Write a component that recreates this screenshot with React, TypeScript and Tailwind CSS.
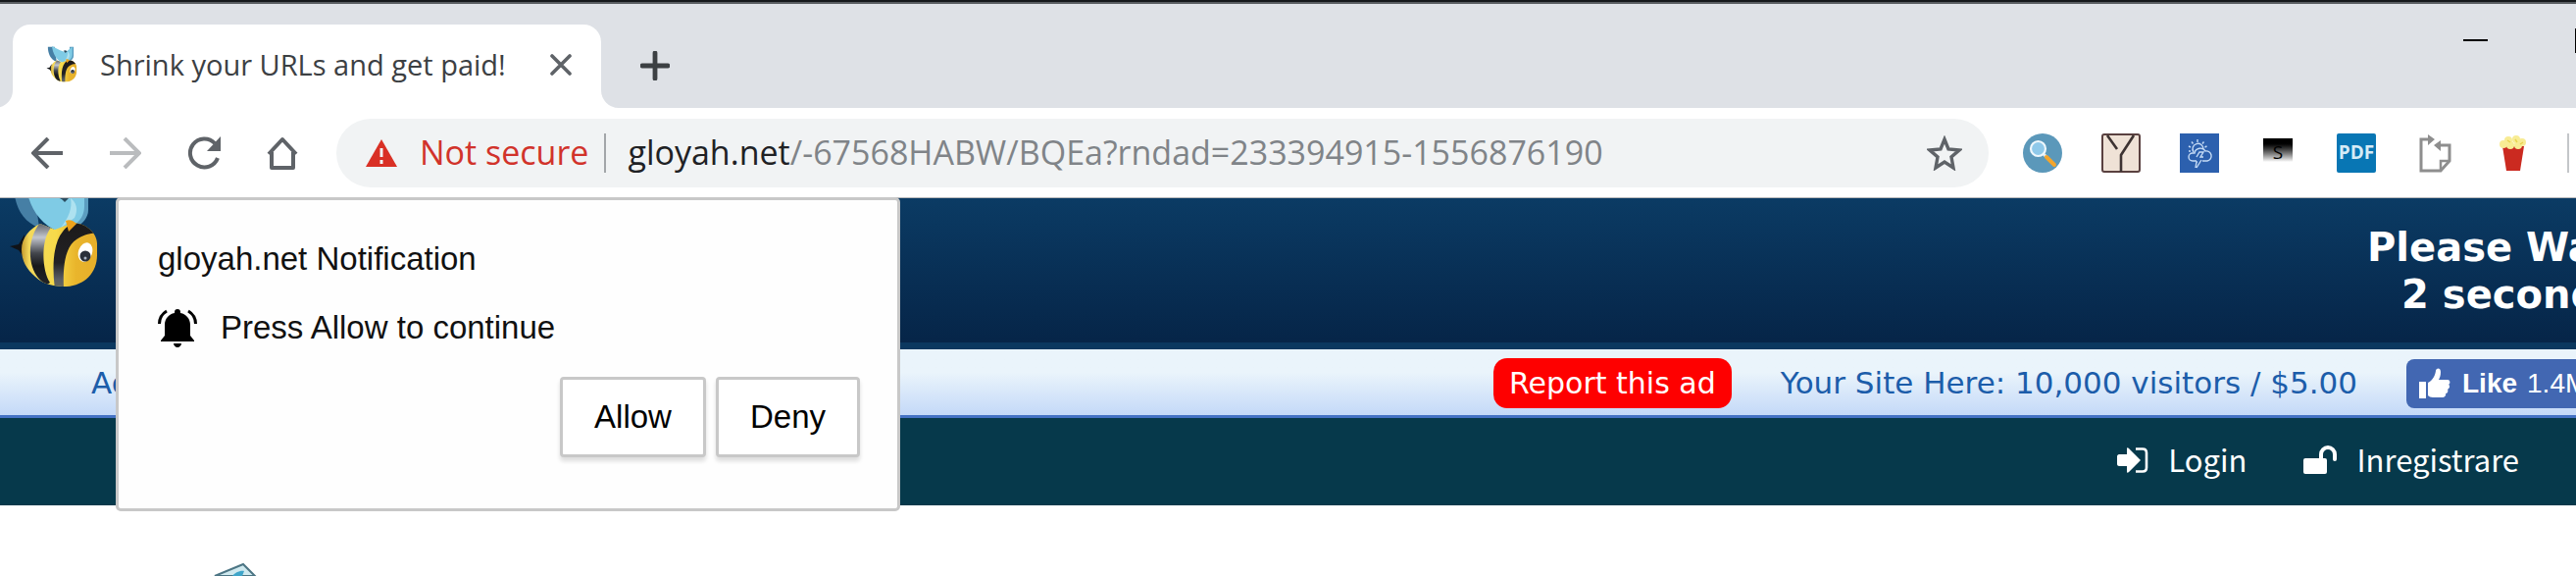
const navButton = 'flex h-10 w-10 items-center justify-center text-[#5f6368]';
const popupButton = 'h-[82px] rounded-[4px] border-3 border-[#c8c8c8] bg-white px-8 text-black shadow-[0_4px_4px_#ddd]';

function Bee({ className }: { className?: string }) {
  return (
    <svg className={className} viewBox="0 -8 90 110" aria-hidden="true">
      <defs>
        <linearGradient id="beeBody" x1="0" x2="1">
          <stop offset="0" stopColor="#b98a24" />
          <stop offset="0.12" stopColor="#f3d95c" />
          <stop offset="0.45" stopColor="#f6da4a" />
          <stop offset="0.7" stopColor="#e9b52c" />
          <stop offset="1" stopColor="#e6ae2a" />
        </linearGradient>
        <linearGradient id="beeStripe" x1="0" y1="0" x2="0" y2="1">
          <stop offset="0" stopColor="#54565c" />
          <stop offset="0.25" stopColor="#c3c6ce" />
          <stop offset="0.5" stopColor="#43464c" />
          <stop offset="0.7" stopColor="#17181b" />
          <stop offset="1" stopColor="#232428" />
        </linearGradient>
        <linearGradient id="beeBand" x1="0" y1="0" x2="0" y2="1">
          <stop offset="0" stopColor="#1c1a1a" />
          <stop offset="0.6" stopColor="#222225" />
          <stop offset="0.85" stopColor="#5a5e66" />
          <stop offset="1" stopColor="#6d6a58" />
        </linearGradient>
        <clipPath id="beeClip">
          <path d="M12 60C12 49 20 39 31 34L46 40 62 34C74 31 89 42 89 54v12C89 84 76 97 58 98 46 98 34 96 26 88 17 80 12 72 12 60z" />
        </clipPath>
      </defs>
      <path d="M4 -6C4 14 12 32 30 38L24 -6z" fill="#467fa5" />
      <path d="M68 -6h12v26c0 8-6 14-12 17z" fill="#5b9dc0" />
      <path d="M16 -8c2 20 12 42 34 50C66 38 76 30 76 16V-6L56 10 40 4z" fill="#7fcbe5" />
      <path d="M50 6l6 6 5-5-5-3z" fill="#2b4c5f" />
      <path d="M62 8c6 4 8 12 4 20l-14 10c8-10 12-20 10-30z" fill="#aee2f0" />
      <path d="M0 57l9-2 6-10v24l-6-8z" fill="#101318" />
      <g clipPath="url(#beeClip)">
        <path d="M10 30h82v74H10z" fill="url(#beeBody)" />
        <path d="M32 32c-10 10-14 30-9 46 3 9 8 15 15 18l3-2C33 82 31 52 42 38z" fill="url(#beeStripe)" />
        <path d="M90 44C80 30 62 30 54 42 44 54 43 78 46 101h9C54 78 56 58 68 50c6-4 14-7 22-6z" fill="url(#beeBand)" />
      </g>
      <path d="M57 31c4-2 8 0 11 3l-8 8z" fill="#eca21c" />
      <ellipse cx="77" cy="63" rx="7" ry="10" fill="#fff" transform="rotate(18 77 63)" />
      <circle cx="77" cy="67" r="5.500" fill="#2a303b" />
      <circle cx="77" cy="69" r="1.500" fill="#a9b4c6" />
    </svg>
  );
}

function TabStrip() {
  return (
    <div className="flex h-[110px] overflow-hidden border-t-2 border-[#15181b] bg-[#dee1e6] shadow-[inset_0_2px_#595d61]">
      <div className="relative ml-[13px] mt-[23px] flex w-[600px] shrink-0 items-center rounded-t-[18px] bg-white pb-1 pl-[34px] pr-[27px]">
        <Bee className="h-[38px] w-8" />
        <span className="ml-[23px] grow whitespace-nowrap text-[29px] text-[#3c4043]">Shrink your URLs and get paid!</span>
        <button aria-label="Close tab" className="flex h-7 w-7 items-center justify-center text-[#5f6368]">
          <svg className="h-[22px] w-[22px]" viewBox="0 0 22 22" stroke="currentColor" strokeWidth="3.6" strokeLinecap="round">
            <path d="M2 2l18 18M20 2L2 20" />
          </svg>
        </button>
        <svg className="absolute -left-[18px] bottom-0 h-[18px] w-[18px]" viewBox="0 0 18 18" fill="#fff">
          <path d="M18 0v18H0C10 18 18 10 18 0z" />
        </svg>
        <svg className="absolute -right-[18px] bottom-0 h-[18px] w-[18px]" viewBox="0 0 18 18" fill="#fff">
          <path d="M0 0v18h18C8 18 0 10 0 0z" />
        </svg>
      </div>
      <button aria-label="New tab" className="ml-[40px] mt-[50px] h-[30px] w-[30px] shrink-0 text-[#3c4043]">
        <svg viewBox="0 0 30 30" stroke="currentColor" strokeWidth="4.8" strokeLinecap="round">
          <path d="M15 2v26M2 15h26" />
        </svg>
      </button>
      <div className="ml-auto flex shrink-0 items-start pt-[27px]">
        <button aria-label="Minimize" className="mr-[89px] flex h-6 w-[25px] items-center">
          <span className="h-[2px] w-full bg-black" />
        </button>
        <button aria-label="Maximize" className="h-[25px] w-[1px] bg-black" />
      </div>
    </div>
  );
}

function Extensions() {
  return (
    <div className="ml-[35px] flex shrink-0 items-center gap-10">
      <button aria-label="Search">
        <svg className="h-10 w-10" viewBox="0 0 40 40">
          <circle cx="20" cy="20" r="20" fill="#5b98ba" />
          <path d="M21 21l3 3" stroke="#e8eef2" strokeWidth="3" />
          <path d="M24 24l8 8" stroke="#f3a52c" strokeWidth="4" strokeLinecap="round" />
          <circle cx="15.500" cy="15.500" r="7.500" fill="#8fc9ea" stroke="#eef7fc" strokeWidth="2.200" />
        </svg>
      </button>
      <button aria-label="Wardrobe">
        <svg className="h-10 w-10" viewBox="0 0 40 40" fill="none" stroke="#5a4140">
          <rect x="1" y="1" width="38" height="38" rx="2" fill="#efe2d6" strokeWidth="2" />
          <path d="M6 2l10 14M33 2L20 22v17" stroke="#3d3332" strokeWidth="2.600" />
        </svg>
      </button>
      <button aria-label="Weather">
        <svg className="h-10 w-10" viewBox="0 0 40 40" fill="none" stroke="#c4daf5" strokeWidth="1.400">
          <path d="M0 0h40v40H0z" fill="#2c60ae" stroke="none" />
          <path d="M14 19a5.500 5.500 0 1 1 10-3" />
          <path d="M18 9V6M13.500 10.500l-1.500-2M23 10.500l1.500-2M11 14l-2-1M25.500 14l2-1M11 18H9" />
          <path d="M17 28h-4a4 4 0 0 1 0-8h2a6 6 0 0 1 11-2 5 5 0 0 1 2 10h-5" />
          <path d="M17 24l3-5h4l-3 5h3M22 27l-5 8M18 29h-1l-1 6" />
        </svg>
      </button>
      <button aria-label="S" className="flex h-10 w-10 items-start justify-center pt-[5px]">
        <span className="flex h-6 w-[30px] items-end justify-center bg-linear-to-b from-black from-15% to-white font-['Open_Sans'] text-[19px] leading-[19px] text-black">S</span>
      </button>
      <button aria-label="PDF" className="flex h-10 w-10 items-center justify-center rounded-[2px] bg-[#0876b4] font-['Open_Sans'] text-[19px] font-bold text-[#d5ebf6]">PDF</button>
      <button aria-label="Copy pages">
        <svg className="h-10 w-10" viewBox="0 0 40 40" fill="none" stroke="#8e8e8e" strokeWidth="3">
          <path d="M13 6H6v32h20l9-10V12H24" />
          <path d="M13 1l7 5-7 6zM26 7l-7 5 7 6z" fill="#8e8e8e" stroke="none" />
          <path d="M26 37V28h8" strokeWidth="2.500" />
        </svg>
      </button>
      <button aria-label="Popcorn">
        <svg className="h-10 w-10" viewBox="0 0 40 40">
          <path d="M9 13h22l-4 25H13z" fill="#cb2a20" />
          <g fill="#f8ec94">
            <circle cx="10" cy="11" r="4" />
            <circle cx="15" cy="7" r="4" />
            <circle cx="23" cy="6" r="4" />
            <circle cx="29" cy="9" r="4" />
            <circle cx="17" cy="12" r="4" />
            <circle cx="25" cy="12" r="4" />
          </g>
          <path d="M14 7l3 2M22 6l2 3M27 11l3-2" stroke="#e8d350" strokeWidth="1.500" />
        </svg>
      </button>
      <span className="-ml-[5px] mr-[7px] h-10 w-[2px] bg-[#c4c6c9]" />
    </div>
  );
}

function Toolbar() {
  return (
    <div className="flex h-[92px] items-center border-b border-[#b5b6b8] bg-white pl-7">
      <div className="flex shrink-0 gap-10">
        <button aria-label="Back" className={navButton}>
          <svg className="h-8 w-8" viewBox="0 0 32 32" fill="none" stroke="currentColor" strokeWidth="4">
            <path d="M32 16H3M17 1L2 16l15 15" />
          </svg>
        </button>
        <button aria-label="Forward" className="flex h-10 w-10 items-center justify-center text-[#babcbe]">
          <svg className="h-8 w-8" viewBox="0 0 32 32" fill="none" stroke="currentColor" strokeWidth="4">
            <path d="M0 16h29M15 1l15 15-15 15" />
          </svg>
        </button>
        <button aria-label="Reload" className={navButton}>
          <svg className="h-[34px] w-[34px]" viewBox="0 0 34 34" fill="none" stroke="currentColor" strokeWidth="4">
            <path d="M31 22A14.500 14.500 0 1 1 28 7" />
            <path d="M34 0v15H20z" fill="currentColor" stroke="none" />
          </svg>
        </button>
        <button aria-label="Home" className={navButton}>
          <svg className="h-[34px] w-8" viewBox="0 0 32 34" fill="none" stroke="currentColor" strokeWidth="4">
            <path d="M2 18L16 3l14 15M5 16v16h22V16" strokeLinejoin="round" />
          </svg>
        </button>
      </div>
      <div className="ml-[35px] flex h-[70px] min-w-0 grow items-center rounded-full bg-[#f1f3f4] pl-[30px] pr-[27px]">
        <svg className="h-[28px] w-[32px] shrink-0" viewBox="0 0 32 28">
          <path d="M16 0l16 28H0z" fill="#d93025" />
          <path d="M16 9v9M16 21v4" stroke="#f1f3f4" strokeWidth="3" />
        </svg>
        <span className="ml-[23px] whitespace-nowrap text-[34px] text-[#d1332b]">Not secure</span>
        <span className="ml-4 h-10 w-[2px] shrink-0 bg-[#a3a6a9]" />
        <a href="#" className="ml-[22px] grow truncate text-[34px] text-[#808488]">
          <span className="text-[#202124]">gloyah.net</span>/-67568HABW/BQEa?rndad=233394915-1556876190
        </a>
        <button aria-label="Bookmark this page" className="shrink-0 text-[#5f6368]">
          <svg className="h-9 w-9" viewBox="0 0 36 36" fill="none" stroke="currentColor" strokeWidth="3.400">
            <path d="M18 4l4 10 11 1-8 7 2 11-9-6-9 6 2-11-8-7 11-1z" />
          </svg>
        </button>
      </div>
      <Extensions />
    </div>
  );
}

function NotificationPopup() {
  return (
    <div role="dialog" aria-label="gloyah.net Notification" className="absolute left-[118px] -top-px h-[320px] w-[800px] rounded-[5px] border-3 border-[#c8c8c8] bg-[#fefefe] pl-10 pr-[38px] pt-10 font-['Liberation_Sans'] text-[33px] text-[#111]">
      <h2 className="leading-10">gloyah.net Notification</h2>
      <div className="mt-[30px] flex items-center gap-6 leading-10">
        <svg className="h-10 w-10" viewBox="0 0 40 40" fill="#000">
          <path d="M20 1c2 0 3 1 3 3v1c6 1 10 6 10 12v11l4 5v1H3v-1l4-5V17C7 11 11 6 17 5V4c0-2 1-3 3-3zM16 36h8c0 2-2 4-4 4s-4-2-4-4z" />
          <path d="M9 3C4 6 1.500 10 1.500 16M31 3c5 3 7.500 7 7.500 13" fill="none" stroke="#000" strokeWidth="3" />
        </svg>
        <p>Press Allow to continue</p>
      </div>
      <div className="mt-[30px] flex justify-end gap-2.5">
        <button className={popupButton}>Allow</button>
        <button className={popupButton}>Deny</button>
      </div>
    </div>
  );
}

function AdBar() {
  return (
    <div className="flex h-[70px] items-center overflow-hidden whitespace-nowrap border-b-3 border-[#4472c4] bg-linear-to-b from-[#eaf4fb] from-35% to-[#c4d9f8] pl-[93px] pt-[2px] font-['DejaVu_Sans'] text-[31px] text-[#1c5daa]">
      <a href="#">Advertising</a>
      <button className="ml-auto h-[51px] shrink-0 rounded-[14px] bg-[#fe0000] px-4 text-[30px] text-white">Report this ad</button>
      <a href="#" className="ml-[50px] shrink-0">Your Site Here: 10,000 visitors / $5.00</a>
      <button className="ml-[50px] flex h-[50px] w-[173px] shrink-0 items-center overflow-hidden rounded-l-lg bg-[#4267b2] pl-[13px] font-['Liberation_Sans'] text-[28px] text-white">
        <svg className="h-8 w-8 shrink-0" viewBox="0 0 32 32" fill="#fff">
          <path d="M0 14h7v17H0zM9 15c4-2 7-6 8-12 0-3 5-4 5 1 0 4-1 6-2 8h9c3 0 3 4 1 5 2 1 1 4-1 5 1 1 0 4-2 4 1 2-1 4-3 4H14c-2 0-4-1-5-2z" />
        </svg>
        <span className="ml-3 font-bold">Like</span>
        <span className="ml-[10px]">1.4M</span>
      </button>
    </div>
  );
}

export default function App() {
  return (
    <div className="min-h-screen overflow-hidden bg-white font-['Open_Sans',sans-serif]">
      <TabStrip />
      <Toolbar />
      <main className="relative">
        <header className="flex h-[154px] overflow-hidden border-b-[7px] border-[#0b385f] bg-linear-to-b from-[#0b3b64] to-[#062548]">
          <Bee className="-mt-4 ml-[10px] h-[110px] w-[90px]" />
          <div className="ml-auto w-[213px] pt-[26px] font-['DejaVu_Sans'] text-[40px] font-bold leading-[48px] text-white">
            <div className="w-max text-center">
              <p>Please Wait...</p>
              <p>2 seconds.</p>
            </div>
          </div>
        </header>
        <AdBar />
        <nav className="flex h-[89px] items-center justify-end gap-[58px] bg-[#06394b] pb-1 pr-[58px] font-['Noto_Sans_CJK_SC'] text-[31px] text-white">
          <a href="#" className="flex items-center gap-5">
            <svg className="h-[26px] w-8" viewBox="0 0 32 26" fill="#fff">
              <path d="M0 9c0-1 1-2 2-2h8V1c0-1 1-1 2 0l11 11c1 1 1 1 0 2L12 25c-1 1-2 1-2 0v-6H2c-1 0-2-1-2-2z" />
              <path d="M19 1.500h7c3 0 4 2 4 4v15c0 2-1 4-4 4h-7" fill="none" stroke="#fff" strokeWidth="2.600" />
            </svg>
            Login
          </a>
          <a href="#" className="flex items-center gap-5">
            <svg className="h-[30px] w-[34px]" viewBox="0 0 34 30" fill="#fff">
              <rect y="13" width="24" height="16" rx="2" />
              <path d="M18 14V9a7 7 0 0 1 14 0v5" fill="none" stroke="#fff" strokeWidth="4" strokeLinecap="round" />
            </svg>
            Inregistrare
          </a>
        </nav>
        <NotificationPopup />
        <svg className="ml-[217px] mt-[58px] h-[14px] w-[46px]" viewBox="0 0 46 14">
          <path d="M2 14L31 2l12 12z" fill="#cfe9ef" stroke="#4c7584" strokeWidth="2" />
          <path d="M20 14c2-3 8-6 12-5l-2 5z" fill="#3fa5c9" />
        </svg>
      </main>
    </div>
  );
}
